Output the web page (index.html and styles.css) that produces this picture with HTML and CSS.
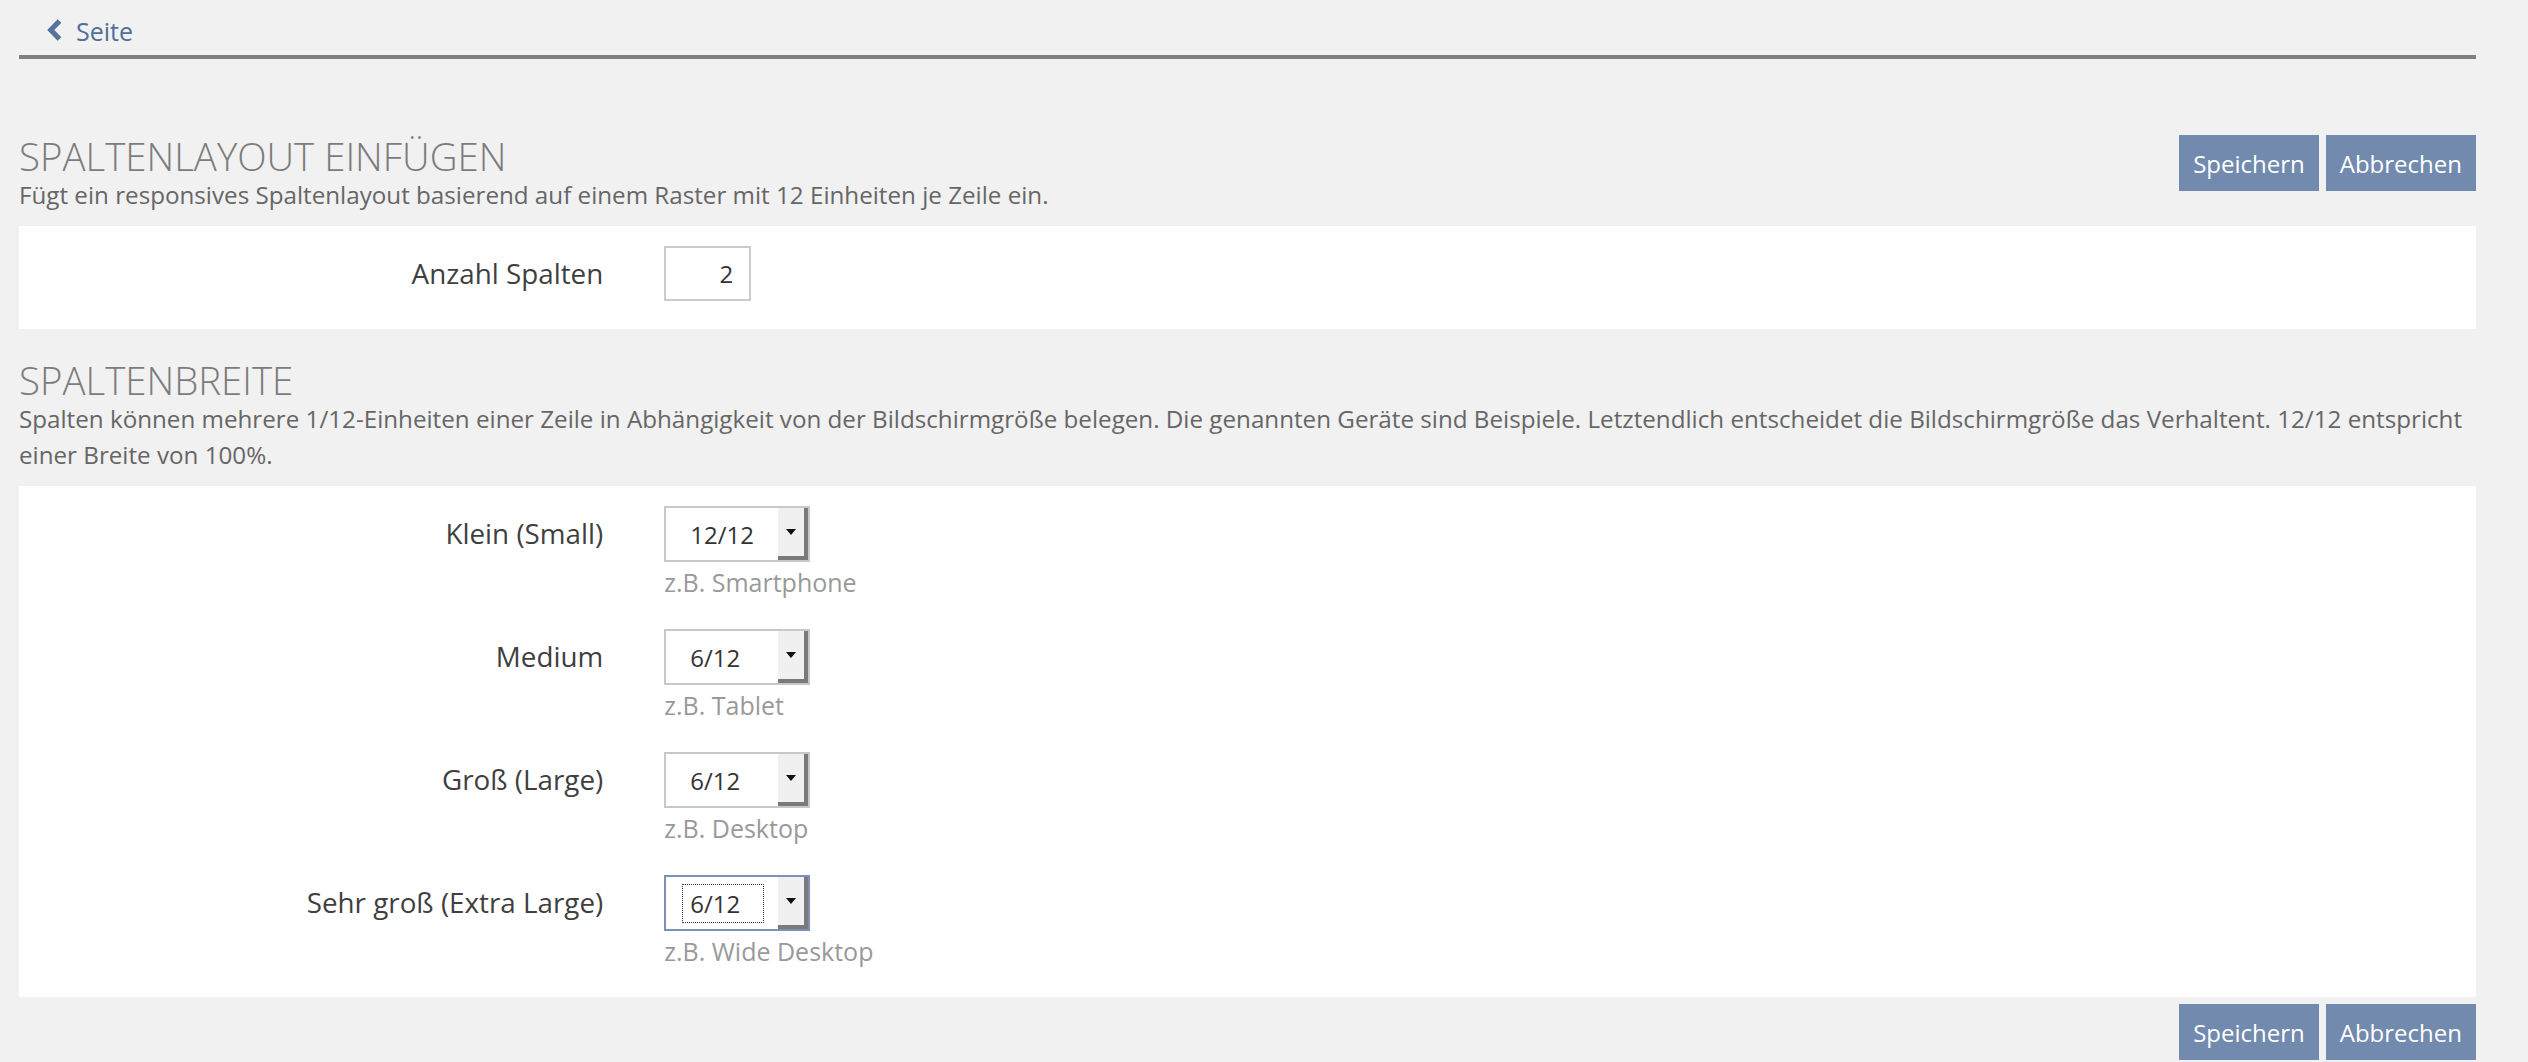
FILE: index.html
```html
<!DOCTYPE html>
<html lang="de">

<head>
    <meta charset="UTF-8">
    <title>Spaltenlayout einfügen</title>
    <link rel="stylesheet" href="styles.css">
</head>

<body>
    <div class="page">
        <div class="topbar">
            <a class="back-link" href="#">
                <svg class="back-icon" viewBox="0 0 16 24" width="16" height="24">
                    <polyline points="12.5,3 3.8,12 12.5,21" fill="none" stroke="currentColor" stroke-width="5.2" stroke-linejoin="miter"></polyline>
                </svg>
                <span>Seite</span>
            </a>
        </div>

        <div class="section-head first">
            <div class="section-text">
                <h2>SPALTENLAYOUT EINFÜGEN</h2>
                <p>Fügt ein responsives Spaltenlayout basierend auf einem Raster mit 12 Einheiten je Zeile ein.</p>
            </div>
            <div class="actions">
                <button class="btn">Speichern</button>
                <button class="btn">Abbrechen</button>
            </div>
        </div>
        <div class="panel">
            <div class="form-row">
                <label class="form-label">Anzahl Spalten</label>
                <div class="form-field">
                    <input class="num-input" type="text" value="2">
                </div>
            </div>
        </div>

        <div class="section-head">
            <div class="section-text">
                <h2>SPALTENBREITE</h2>
                <p>Spalten können mehrere 1/12-Einheiten einer Zeile in Abhängigkeit von der Bildschirmgröße belegen. Die genannten Geräte sind Beispiele. Letztendlich entscheidet die Bildschirmgröße das Verhaltent. 12/12 entspricht einer Breite von 100%.</p>
            </div>
        </div>
        <div class="panel panel-rows">
            <div class="form-row">
                <label class="form-label">Klein (Small)</label>
                <div class="form-field">
                    <div class="select">
                        <span class="select-value">12/12</span>
                        <span class="select-arrow"></span>
                    </div>
                    <div class="hint">z.B. Smartphone</div>
                </div>
            </div>
            <div class="form-row">
                <label class="form-label">Medium</label>
                <div class="form-field">
                    <div class="select">
                        <span class="select-value">6/12</span>
                        <span class="select-arrow"></span>
                    </div>
                    <div class="hint">z.B. Tablet</div>
                </div>
            </div>
            <div class="form-row">
                <label class="form-label">Groß (Large)</label>
                <div class="form-field">
                    <div class="select">
                        <span class="select-value">6/12</span>
                        <span class="select-arrow"></span>
                    </div>
                    <div class="hint">z.B. Desktop</div>
                </div>
            </div>
            <div class="form-row">
                <label class="form-label">Sehr groß (Extra Large)</label>
                <div class="form-field">
                    <div class="select focused">
                        <span class="select-value"><span class="focus-ring">6/12</span></span>
                        <span class="select-arrow"></span>
                    </div>
                    <div class="hint">z.B. Wide Desktop</div>
                </div>
            </div>
        </div>

        <div class="actions bottom">
            <button class="btn">Speichern</button>
            <button class="btn">Abbrechen</button>
        </div>
    </div>
</body>

</html>
```

FILE: styles.css
```css
body,
div,
h2,
p,
label,
button,
input {
    padding: 0;
    margin: 0;
}

body {
    background: #f1f1f1;
    font-family: "Open Sans", "Liberation Sans", sans-serif;
    color: #444;
}

.page {
    padding: 0 52px 0 19px;
}

.topbar {
    height: 47px;
    padding: 8px 0 0 28px;
    border-bottom: 4px solid #808080;
}

.back-link {
    display: flex;
    align-items: center;
    height: 47px;
    font-size: 25px;
    line-height: 47px;
    color: #4f6e98;
    text-decoration: none;
}

.back-icon {
    margin: -3px 13px 0 0;
    color: #56739b;
}

.section-head {
    display: flex;
    align-items: flex-start;
    margin-top: 30px;
}

.section-head.first {
    margin-top: 76px;
}

.section-text {
    flex: 1;
}

.section-text h2 {
    font-size: 38.4px;
    font-weight: 300;
    line-height: 42px;
    color: #7c7c7c;
}

.section-text p {
    margin-bottom: 13px;
    font-size: 24.2px;
    line-height: 36px;
    color: #666;
}

.actions {
    display: flex;
    gap: 7px;
}

.actions.bottom {
    justify-content: flex-end;
    margin-top: 7px;
}

.btn {
    height: 56px;
    padding: 0 14px;
    font-family: "Open Sans", "Liberation Sans", sans-serif;
    font-size: 24px;
    color: #fff;
    background: #718aae;
    border: none;
    cursor: pointer;
}

.panel {
    padding: 20px 0 28px;
    background: #fff;
}

.panel-rows {
    display: flex;
    flex-direction: column;
    gap: 30px;
    padding-bottom: 29px;
}

.form-row {
    display: grid;
    grid-template-columns: 25% 75%;
}

.form-label {
    padding-right: 30px;
    font-size: 27.8px;
    line-height: 55px;
    text-align: right;
    color: #3f3f3f;
}

.form-field {
    padding-left: 31px;
}

.num-input {
    box-sizing: border-box;
    width: 87px;
    height: 55px;
    padding-right: 16px;
    font-family: "Open Sans", "Liberation Sans", sans-serif;
    font-size: 24px;
    text-align: right;
    color: #333;
    border: 2px solid #cbcbcb;
    outline: none;
}

.select {
    box-sizing: border-box;
    display: flex;
    width: 146px;
    height: 56px;
    border: 2px solid #c8c8c8;
    background: #fff;
}

.select.focused {
    border-color: #7b92b6;
}

.select-value {
    flex: 1;
    display: flex;
    align-items: center;
    padding-left: 24px;
    font-size: 24px;
    color: #333;
}

.focus-ring {
    margin-left: -8px;
    padding: 0 23px 0 7px;
    line-height: 37px;
    border: 1px dotted #333;
}

.select-arrow {
    position: relative;
    width: 26px;
    background: #f0f0f0;
    border-right: 4px solid #7a7a7a;
    border-bottom: 4px solid #7a7a7a;
}

.select-arrow::after {
    content: "";
    position: absolute;
    top: 50%;
    left: 50%;
    margin: -3px 0 0 -5px;
    border-top: 6px solid #111;
    border-left: 5px solid transparent;
    border-right: 5px solid transparent;
}

.hint {
    margin-top: 3px;
    font-size: 25px;
    line-height: 34px;
    color: #999;
}
```
